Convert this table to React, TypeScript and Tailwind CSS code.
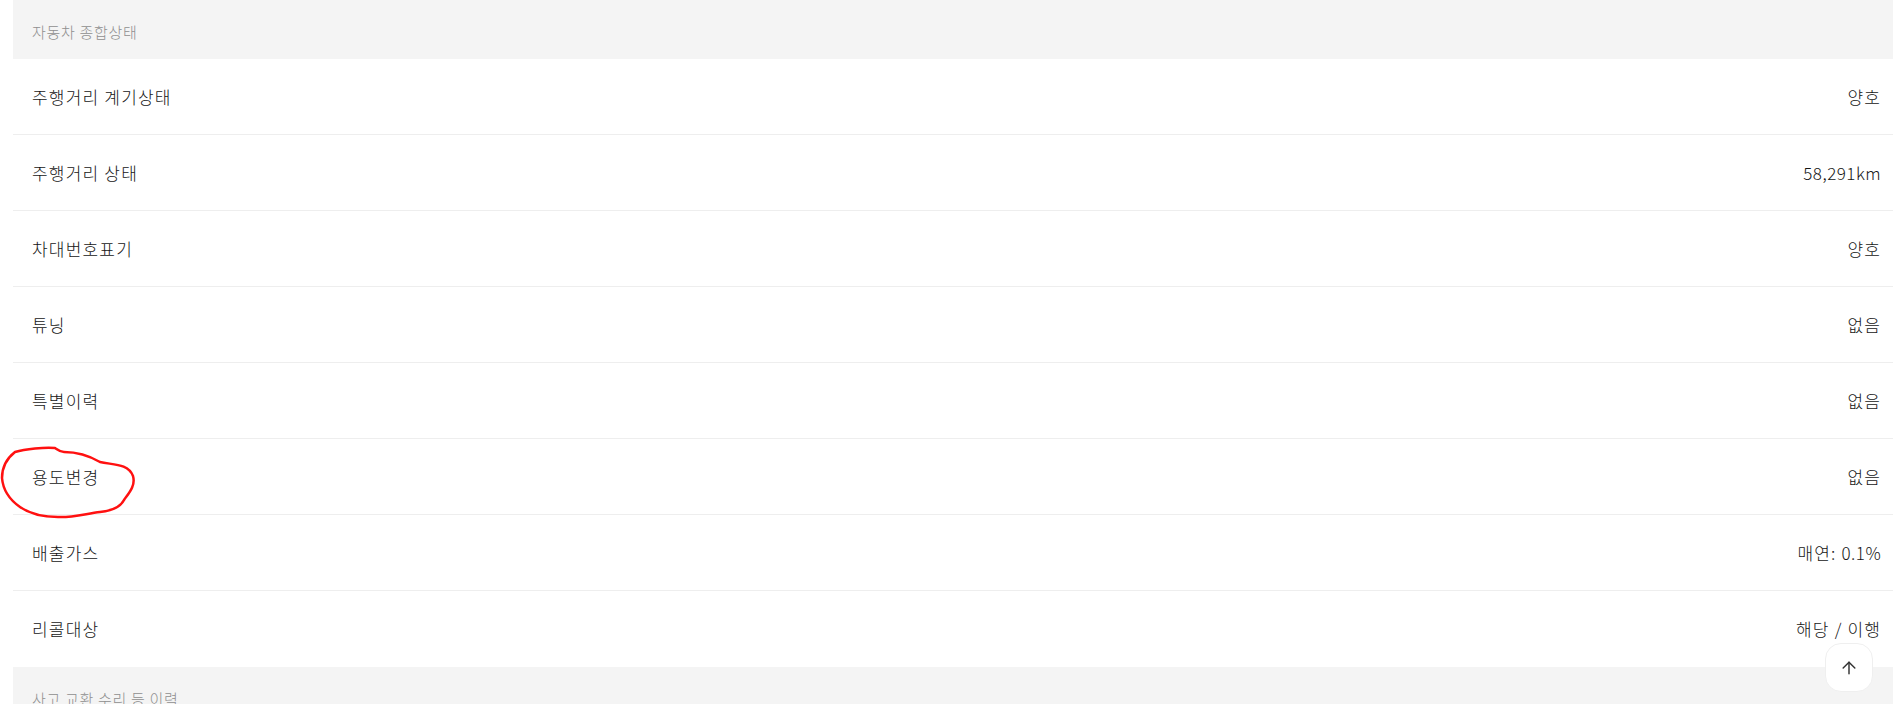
import { ArrowUp } from "lucide-react";

type Row = { label: string; value: string };

const rows: Row[] = [
	{ label: "주행거리 계기상태", value: "양호" },
	{ label: "주행거리 상태", value: "58,291km" },
	{ label: "차대번호표기", value: "양호" },
	{ label: "튜닝", value: "없음" },
	{ label: "특별이력", value: "없음" },
	{ label: "용도변경", value: "없음" },
	{ label: "배출가스", value: "매연: 0.1%" },
	{ label: "리콜대상", value: "해당 / 이행" },
];

// latin runs are tighter than hangul in the original font
const Mixed = ({ text }: { text: string }) => (
	<>
		{text.split(/([0-9a-zA-Z.,:%]+)/).map((part, i) =>
			/[0-9a-zA-Z]/.test(part) ? (
				<span key={i} className="tracking-[0.5px]">
					{part}
				</span>
			) : (
				<span key={i}>{part}</span>
			)
		)}
	</>
);

const SectionTitle = ({ title }: { title: string }) => (
	<div className="h-[59px] flex items-center bg-[#f4f4f4] pl-[19px] pt-[6px] text-[15px] tracking-[0.7px] font-light text-[#8f8f8f]">
		{title}
	</div>
);

export default function App() {
	return (
		<div
			className="relative bg-white min-h-screen overflow-hidden"
			style={{ fontFamily: '"Noto Sans CJK KR", "Noto Sans", sans-serif' }}>
			<div className="ml-[13px]">
				<SectionTitle title="자동차 종합상태" />
				<ul>
					{rows.map((row, i) => (
						<li
							key={row.label}
							className={`h-[76px] flex items-center justify-between pl-[19px] pr-[13px] text-[17px] tracking-[1.2px] font-light text-[#151515] ${
								i < rows.length - 1 ? "border-b border-[#eeeeee]" : ""
							}`}>
							<span>{row.label}</span>
							<span className="-mr-[1.2px]">
								<Mixed text={row.value} />
							</span>
						</li>
					))}
				</ul>
				<SectionTitle title="사고 교환 수리 등 이력" />
				<div className="h-[200px]" />
			</div>

			{/* red marker loop around 용도변경 */}
			<svg
				className="absolute left-0 top-[440px] pointer-events-none"
				width="140"
				height="85"
				viewBox="0 440 140 85"
				fill="none">
				<path
					d="M15 452 C25 449 45 447 55 448 C58 450 60 452 64 452 C75 452 88 455 100 462 C112 465 128 463 133 476 C136 486 128 494 124 500 C120 508 110 511 100 512 C85 514 70 518 58 517 C45 517 30 514 20 507 C10 500 3 490 2 478 C2 468 6 459 15 452 Z"
					stroke="#ff1010"
					strokeWidth="2.5"
					strokeLinejoin="round"
				/>
			</svg>

			<button className="fixed right-[20px] bottom-[12px] w-[48px] h-[49px] rounded-2xl bg-white border border-[#efefef] flex items-center justify-center text-[#333]">
				<ArrowUp size={20} strokeWidth={1.75} />
			</button>
		</div>
	);
}
